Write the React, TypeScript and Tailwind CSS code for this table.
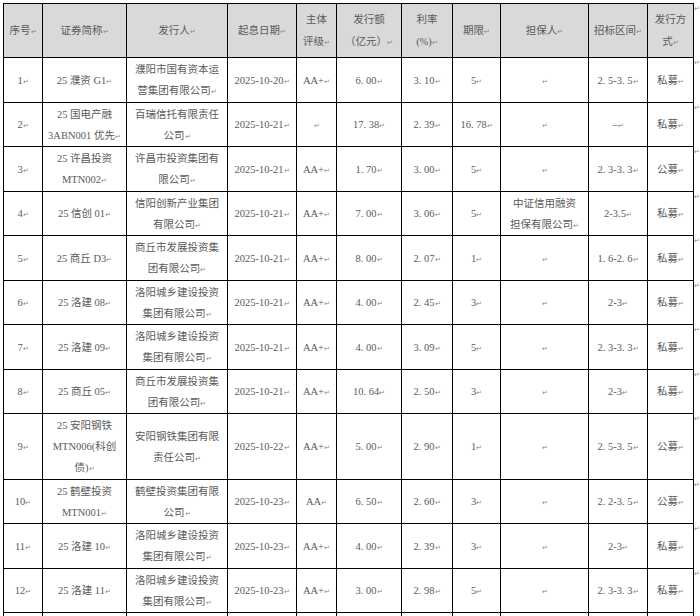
const cols = [39, 84, 101, 69, 40, 65, 51, 48, 88, 59, 46];

const header: string[][] = [
	["序号"],
	["证券简称"],
	["发行人"],
	["起息日期"],
	["主体", "评级"],
	["发行额", "（亿元）"],
	["利率", "(%)"],
	["期限"],
	["担保人"],
	["招标区间"],
	["发行方", "式"],
];

type Row = { h: number; cells: string[][] };

const rows: Row[] = [
	{ h: 45, cells: [["1"], ["25 濮资 G1"], ["濮阳市国有资本运", "营集团有限公司"], ["2025-10-20"], ["AA+"], ["6. 00"], ["3. 10"], ["5"], [""], ["2. 5-3. 5"], ["私募"]] },
	{ h: 44, cells: [["2"], ["25 国电产融", "3ABN001 优先"], ["百瑞信托有限责任", "公司"], ["2025-10-21"], [""], ["17. 38"], ["2. 39"], ["16. 78"], [""], ["–"], ["私募"]] },
	{ h: 45, cells: [["3"], ["25 许昌投资", "MTN002"], ["许昌市投资集团有", "限公司"], ["2025-10-21"], ["AA+"], ["1. 70"], ["3. 00"], ["5"], [""], ["2. 3-3. 3"], ["公募"]] },
	{ h: 44, cells: [["4"], ["25 信创 01"], ["信阳创新产业集团", "有限公司"], ["2025-10-21"], ["AA+"], ["7. 00"], ["3. 06"], ["5"], ["中证信用融资", "担保有限公司"], ["2-3.5"], ["私募"]] },
	{ h: 45, cells: [["5"], ["25 商丘 D3"], ["商丘市发展投资集", "团有限公司"], ["2025-10-21"], ["AA+"], ["8. 00"], ["2. 07"], ["1"], [""], ["1. 6-2. 6"], ["私募"]] },
	{ h: 44, cells: [["6"], ["25 洛建 08"], ["洛阳城乡建设投资", "集团有限公司"], ["2025-10-21"], ["AA+"], ["4. 00"], ["2. 45"], ["3"], [""], ["2-3"], ["私募"]] },
	{ h: 45, cells: [["7"], ["25 洛建 09"], ["洛阳城乡建设投资", "集团有限公司"], ["2025-10-21"], ["AA+"], ["4. 00"], ["3. 09"], ["5"], [""], ["2. 3-3. 3"], ["私募"]] },
	{ h: 44, cells: [["8"], ["25 商丘 05"], ["商丘市发展投资集", "团有限公司"], ["2025-10-21"], ["AA+"], ["10. 64"], ["2. 50"], ["3"], [""], ["2-3"], ["私募"]] },
	{ h: 66, cells: [["9"], ["25 安阳钢铁", "MTN006(科创", "债)"], ["安阳钢铁集团有限", "责任公司"], ["2025-10-22"], ["AA+"], ["5. 00"], ["2. 90"], ["1"], [""], ["2. 5-3. 5"], ["公募"]] },
	{ h: 44, cells: [["10"], ["25 鹤壁投资", "MTN001"], ["鹤壁投资集团有限", "公司"], ["2025-10-23"], ["AA"], ["6. 50"], ["2. 60"], ["3"], [""], ["2. 2-3. 5"], ["公募"]] },
	{ h: 45, cells: [["11"], ["25 洛建 10"], ["洛阳城乡建设投资", "集团有限公司"], ["2025-10-23"], ["AA+"], ["4. 00"], ["2. 39"], ["3"], [""], ["2-3"], ["私募"]] },
	{ h: 44, cells: [["12"], ["25 洛建 11"], ["洛阳城乡建设投资", "集团有限公司"], ["2025-10-23"], ["AA+"], ["3. 00"], ["2. 98"], ["5"], [""], ["2. 3-3. 3"], ["私募"]] },
	{ h: 44, cells: [[""], [""], [""], [""], [""], [""], [""], [""], [""], [""], [""]] },
];

function Mark() {
	return <span className="text-[7px] text-[#888] align-baseline">↵</span>;
}

function Cell({ lines, head }: { lines: string[]; head?: boolean }) {
	return (
		<>
			{lines.map((line, i) => (
				<div
					key={i}
					className={
						head
							? "whitespace-nowrap h-[22px] leading-[22px]"
							: "whitespace-nowrap h-[21px] leading-[21px]"
					}
				>
					{line}
					{i === lines.length - 1 && <Mark />}
				</div>
			))}
		</>
	);
}

export default function App() {
	return (
		<div className="bg-white w-[700px] h-[616px] overflow-hidden pl-[3px] pt-[3px] font-['Liberation_Serif','Noto_Sans_CJK_SC',serif] text-[10.5px] text-[#5a5a5a]">
			<table className="border-collapse table-fixed w-[697px]">
				<colgroup>
					{cols.map((w, i) => (
						<col key={i} style={{ width: w }} />
					))}
					<col style={{ width: 7 }} />
				</colgroup>
				<thead>
					<tr className="h-[54px]">
						{header.map((lines, i) => (
							<th
								key={i}
								className="border-[1.5px] border-black bg-[#d9d9d9] font-normal text-center align-middle p-0"
							>
								<Cell lines={lines} head />
							</th>
						))}
						<td className="align-top p-0 text-[7px] text-[#888] leading-[10px]">↵</td>
					</tr>
				</thead>
				<tbody>
					{rows.map((row, r) => {
						const empty = row.cells[0][0] === "";
						return (
							<tr key={r} style={{ height: row.h }}>
								{row.cells.map((lines, i) => (
									<td
										key={i}
										className="border-[1.5px] border-black text-center align-middle p-0"
									>
										{!empty && <Cell lines={lines} />}
									</td>
								))}
								<td className="align-top p-0 text-[7px] text-[#888] leading-[10px]">
									{empty ? "" : "↵"}
								</td>
							</tr>
						);
					})}
				</tbody>
			</table>
		</div>
	);
}
